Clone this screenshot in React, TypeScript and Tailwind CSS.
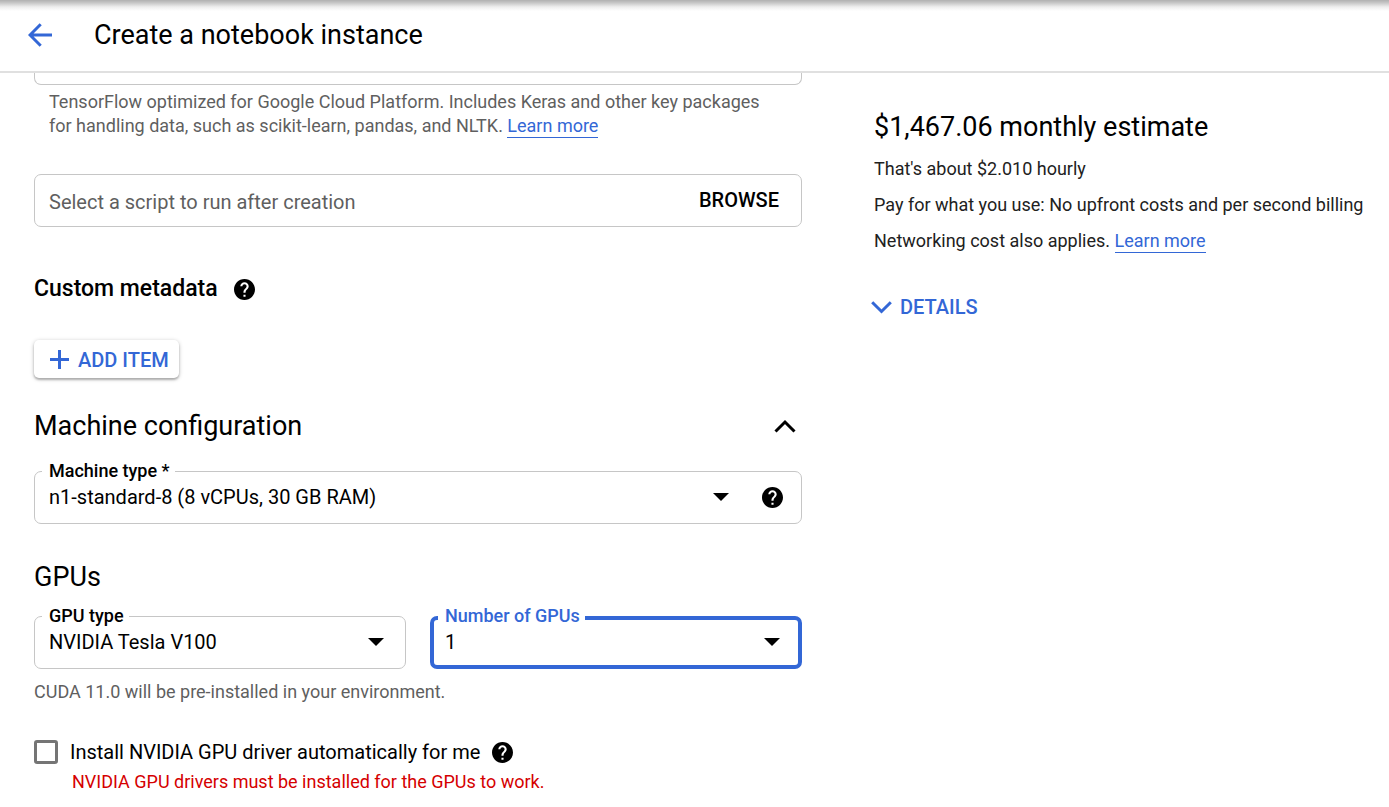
import type { ReactNode } from "react";

function HelpIcon() {
  return (
    <svg viewBox="2 2 20 20" className="size-[21px]" fill="currentColor" aria-hidden="true">
      <path d="M12 2C6.48 2 2 6.48 2 12s4.48 10 10 10 10-4.48 10-10S17.52 2 12 2zm1 17h-2v-2h2v2zm2.07-7.75l-.9.92C13.45 12.9 13 13.5 13 15h-2v-.5c0-1.1.45-2.1 1.17-2.83l1.24-1.26c.37-.36.59-.86.59-1.41 0-1.1-.9-2-2-2s-2 .9-2 2H8c0-2.21 1.79-4 4-4s4 1.79 4 4c0 .88-.36 1.68-.93 2.25z" />
    </svg>
  );
}

function HelpButton({ label }: { label: string }) {
  return (
    <button type="button" aria-label={label} className="block shrink-0 text-black">
      <HelpIcon />
    </button>
  );
}

function LearnMore() {
  return (
    <a href="#learn-more" className="border-b border-[#3367d6] pb-px text-[#3367d6]">
      Learn more
    </a>
  );
}

type SelectFieldProps = {
  id: string;
  label: string;
  value: string;
  active?: boolean;
  children?: ReactNode;
};

function SelectField({ id, label, value, active = false, children }: SelectFieldProps) {
  return (
    <div className="relative flex h-[53px] items-center">
      <div
        className={
          active
            ? "pointer-events-none absolute inset-0 rounded-[7px] border-4 border-[#3367d6]"
            : "pointer-events-none absolute inset-0 rounded-[7px] border border-[#c6c6c6]"
        }
      />
      <label
        htmlFor={id}
        className={
          active
            ? "absolute -top-3 left-2 bg-white pr-[5px] pl-[7px] text-lg leading-6 font-medium text-[#3367d6]"
            : "absolute -top-3 left-2 bg-white pr-[5px] pl-[7px] text-lg leading-6 font-medium text-black"
        }
      >
        {label}
      </label>
      <div className="relative min-w-0 flex-1 pb-px">
        <select
          id={id}
          defaultValue={value}
          className="block h-8 w-full appearance-none bg-transparent pr-12 pl-[15px] text-xl leading-8 text-black outline-none"
        >
          <option>{value}</option>
        </select>
        <svg
          viewBox="0 0 16 8"
          className="pointer-events-none absolute top-3 right-[22px] h-2 w-4"
          aria-hidden="true"
        >
          <path d="M0 0h16L8 8z" />
        </svg>
      </div>
      {children}
    </div>
  );
}

export default function App() {
  return (
    <div className="min-h-screen bg-white font-[Roboto,sans-serif] text-black">
      <header className="flex h-[73px] items-center border-b-2 border-[#e0e0e0] bg-[linear-gradient(to_bottom,#b0b0b0_0px,#c8c8c8_3px,#eeeeee_7px,#ffffff_11px)] pb-[2px] pl-7">
        <button type="button" aria-label="Back" className="text-[#3367d6]">
          <svg viewBox="0 0 24 24" className="size-6" fill="none" stroke="currentColor" strokeWidth="3" aria-hidden="true">
            <path d="M24 12H2M12.7 1.2L2 12l10.7 10.8" />
          </svg>
        </button>
        <h1 className="ml-[42px] text-[27px] leading-9">Create a notebook instance</h1>
      </header>

      <div className="flex gap-[72px] pl-[34px]">
        <main className="min-w-0 flex-1">
          <div className="h-3 rounded-b-[7px] border border-t-0 border-[#c6c6c6]" />
          <p className="mt-[5px] pr-8 pl-[15px] text-lg leading-6 text-[#5f5f5f]">
            TensorFlow optimized for Google Cloud Platform. Includes Keras and other key packages for
            handling data, such as scikit-learn, pandas, and NLTK. <LearnMore />
          </p>

          <div className="mt-9 flex h-[53px] items-center rounded-[7px] border border-[#c6c6c6] pr-[22px] pl-[14px]">
            <input
              type="text"
              aria-label="Script to run after creation"
              placeholder="Select a script to run after creation"
              className="h-8 min-w-0 flex-1 pt-[2px] text-xl outline-none placeholder:text-[#5f5f5f] placeholder:opacity-100"
            />
            <button type="button" className="pb-px text-xl leading-7 font-medium">
              BROWSE
            </button>
          </div>

          <div className="mt-12 flex h-7 items-center gap-4">
            <h2 className="text-[23px] leading-7 font-medium">Custom metadata</h2>
            <HelpButton label="About custom metadata" />
          </div>

          <button
            type="button"
            className="mt-[37px] flex h-[38px] items-center gap-[9px] rounded-[5px] bg-white pt-px pr-[10px] pl-4 text-xl font-medium text-[#3367d6] shadow-[0_1px_4px_rgba(0,0,0,0.25),0_2px_2px_rgba(0,0,0,0.2)]"
          >
            <svg viewBox="0 0 19 19" className="size-[19px]" fill="none" stroke="currentColor" strokeWidth="3" aria-hidden="true">
              <path d="M9.5 0v19M0 9.5h19" />
            </svg>
            ADD ITEM
          </button>

          <div className="mt-[30px] flex items-center justify-between pr-[6px]">
            <h2 className="text-[27px] leading-9">Machine configuration</h2>
            <button type="button" aria-label="Collapse machine configuration">
              <svg viewBox="0 0 22 14" className="h-[14px] w-[22px]" fill="none" stroke="currentColor" strokeWidth="3" aria-hidden="true">
                <path d="M1.5 12.5L11 3l9.5 9.5" />
              </svg>
            </button>
          </div>

          <div className="mt-[27px]">
            <SelectField id="machine-type" label="Machine type *" value="n1-standard-8 (8 vCPUs, 30 GB RAM)">
              <div className="pr-[19px] pl-[11px]">
                <HelpButton label="About machine types" />
              </div>
            </SelectField>
          </div>

          <h2 className="mt-[35px] text-[27px] leading-9">GPUs</h2>
          <div className="mt-[21px] grid grid-cols-2 gap-6">
            <SelectField id="gpu-type" label="GPU type" value="NVIDIA Tesla V100" />
            <SelectField id="gpu-count" label="Number of GPUs" value="1" active />
          </div>
          <p className="mt-[11px] text-lg leading-6 text-[#5f5f5f]">
            CUDA 11.0 will be pre-installed in your environment.
          </p>

          <div className="mt-9 flex h-6 items-center">
            <input
              id="install-driver"
              type="checkbox"
              aria-describedby="driver-note"
              className="size-6 shrink-0 appearance-none rounded-[3px] border-3 border-[#757575] bg-white"
            />
            <label htmlFor="install-driver" className="mr-3 ml-3 text-xl leading-6">
              Install NVIDIA GPU driver automatically for me
            </label>
            <HelpButton label="About the GPU driver" />
          </div>
          <p id="driver-note" className="mt-[6px] pl-[38px] text-lg leading-6 text-[#d50000]">
            NVIDIA GPU drivers must be installed for the GPUs to work.
          </p>
        </main>

        <aside className="w-[515px] shrink-0 pt-9">
          <h2 className="text-[27px] leading-9">$1,467.06 monthly estimate</h2>
          <div className="mt-[6px] text-lg leading-9 text-[#212121]">
            <p>That's about $2.010 hourly</p>
            <p>Pay for what you use: No upfront costs and per second billing</p>
            <p>
              Networking cost also applies. <LearnMore />
            </p>
          </div>
          <button
            type="button"
            className="mt-[34px] -ml-[3px] flex items-center gap-2 text-xl leading-7 font-medium text-[#3367d6]"
          >
            <svg viewBox="0 0 21 13" className="h-[13px] w-[21px]" fill="none" stroke="currentColor" strokeWidth="3" aria-hidden="true">
              <path d="M1.2 1.2l9.3 9.3 9.3-9.3" />
            </svg>
            DETAILS
          </button>
        </aside>
      </div>
    </div>
  );
}
